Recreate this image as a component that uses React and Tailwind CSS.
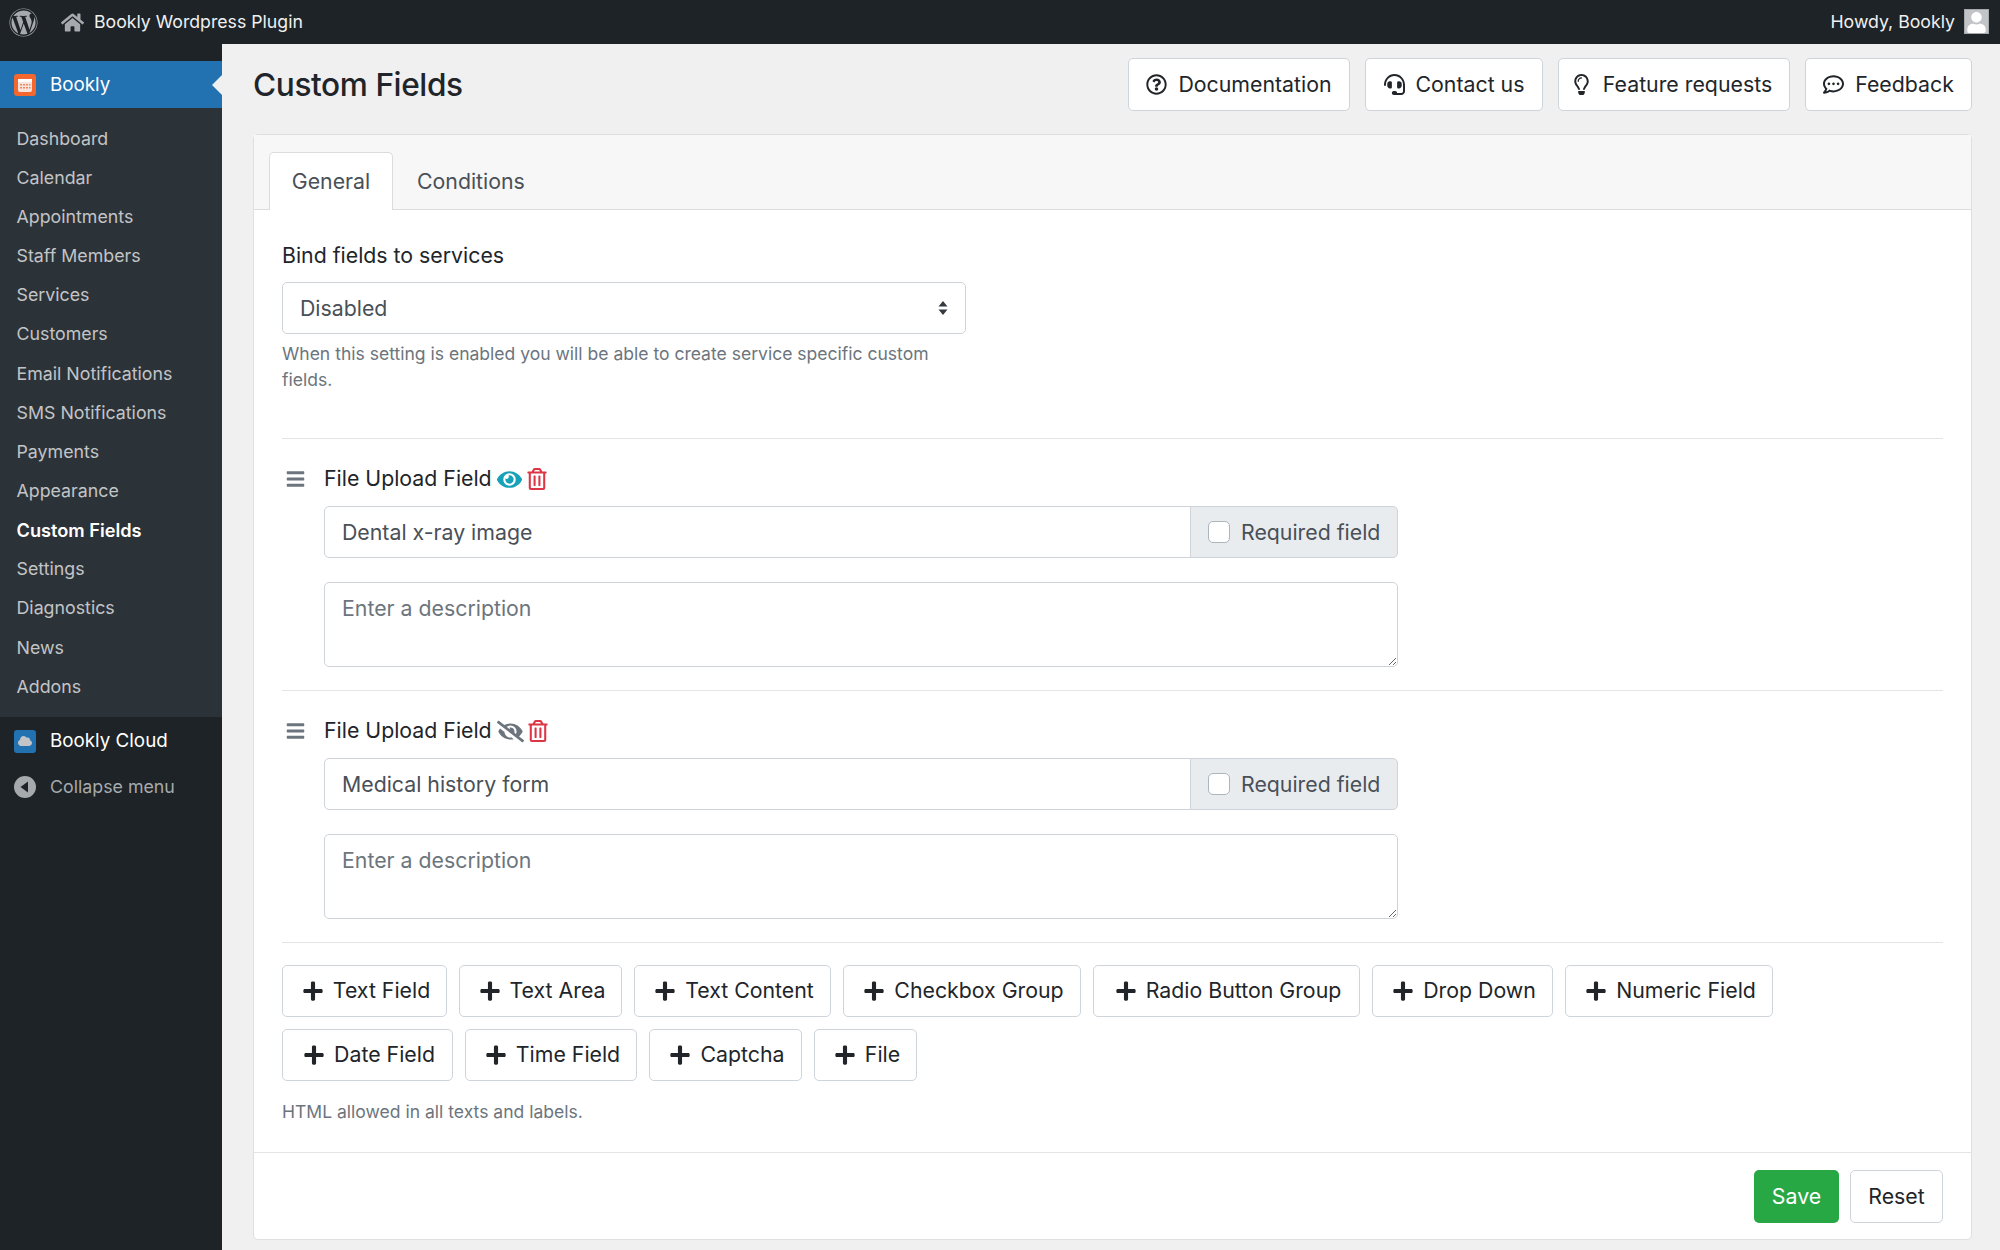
import { FaBars, FaCloud, FaEye, FaEyeSlash, FaHeadset, FaHome, FaPlus, FaRegCommentDots, FaRegLightbulb, FaRegQuestionCircle, FaRegTrashAlt, FaUser, FaWordpress } from 'react-icons/fa';

const menu = ['Dashboard', 'Calendar', 'Appointments', 'Staff Members', 'Services', 'Customers', 'Email Notifications', 'SMS Notifications', 'Payments', 'Appearance', 'Custom Fields', 'Settings', 'Diagnostics', 'News', 'Addons'];

const topButtons = [
  { label: 'Documentation', icon: FaRegQuestionCircle, width: 'w-[222px]' },
  { label: 'Contact us', icon: FaHeadset, width: 'w-[178px]' },
  { label: 'Feature requests', icon: FaRegLightbulb, width: 'w-[232px] pr-[5px]' },
  { label: 'Feedback', icon: FaRegCommentDots, width: 'w-[167px]' },
];

const addRows = [
  [['Text Field', 'w-[165px]'], ['Text Area', 'w-[163px]'], ['Text Content', 'w-[197px]'], ['Checkbox Group', 'w-[238px]'], ['Radio Button Group', 'w-[267px]'], ['Drop Down', 'w-[181px]'], ['Numeric Field', 'w-[208px]']],
  [['Date Field', 'w-[171px]'], ['Time Field', 'w-[172px]'], ['Captcha', 'w-[153px]'], ['File', 'w-[103px]']],
];

function CalendarIcon() {
  return (
    <svg width="22" height="22" viewBox="0 0 22 22" className="shrink-0">
      <rect width="22" height="22" rx="3" fill="#f4682f" />
      <rect x="4" y="5" width="14" height="13" rx="2" fill="#f6e4dc" />
      <rect x="4" y="5" width="14" height="3" fill="#ffffff" />
      <path d="M6 10h2v1.5H6zM9 10h2v1.5H9zM12 10h2v1.5h-2zM15 10h1.5v1.5H15zM6 13h2v1.5H6zM9 13h2v1.5H9zM12 13h2v1.5h-2zM15 13h1.5v1.5H15z" fill="#f08a65" />
    </svg>
  );
}

function CollapseIcon() {
  return (
    <svg width="22" height="22" viewBox="0 0 22 22" className="shrink-0">
      <circle cx="11" cy="11" r="11" fill="#a7aaad" />
      <path d="M14 5.5v11L6.5 11z" fill="#1d2327" />
    </svg>
  );
}

function Sidebar() {
  return (
    <aside className="w-[222px] shrink-0 bg-[#1d2327] pt-[17px]">
      <div className="relative flex h-[47px] items-center gap-[14px] bg-[#2271b1] pl-[14px] text-[18.8px] text-white">
        <CalendarIcon />
        <span className="pt-[2px]">Bookly</span>
        <span className="absolute right-0 top-[14px] border-y-[10px] border-r-[10px] border-y-transparent border-r-[#f0f0f1]" />
      </div>
      <ul className="h-[609px] bg-[#2c3338] pt-[11.5px]">
        {menu.map(item => (
          <li
            key={item}
            className={`flex h-[39.15px] items-center pl-[16.5px] ${item === 'Custom Fields' ? 'text-[18.2px] font-semibold text-white' : 'text-[17.8px] text-[#c3c4c7]'}`}
          >
            {item}
          </li>
        ))}
      </ul>
      <div className="pt-[1px]">
        <div className="flex h-[46px] items-center gap-[14px] pl-[14px] text-[18.8px] text-white">
          <span className="flex h-[23px] w-[22px] items-center justify-center rounded-[3px] bg-[#2271b1] text-[14px] text-[#c3c4c7]">
            <FaCloud />
          </span>
          <span>Bookly Cloud</span>
        </div>
        <div className="flex h-[46px] items-center gap-[14px] pl-[14px] text-[17.8px] text-[#a7aaad]">
          <CollapseIcon />
          <span>Collapse menu</span>
        </div>
      </div>
    </aside>
  );
}

function TopBar() {
  return (
    <header className="flex h-[44px] items-center justify-between bg-[#1d2327] pl-[9px] pr-[11px] text-[17.7px] text-[#f0f0f1]">
      <div className="flex items-center">
        <FaWordpress className="text-[29px] text-[#a7aaad]" />
        <FaHome className="ml-[23px] text-[23px] text-[#a7aaad]" />
        <span className="ml-[10px]">Bookly Wordpress Plugin</span>
      </div>
      <div className="flex items-center gap-[9px]">
        <span>Howdy, Bookly</span>
        <span className="flex h-[25px] w-[25px] items-end justify-center border border-[#a7aaad] bg-[#c3c4c7] text-[21px] text-white">
          <FaUser />
        </span>
      </div>
    </header>
  );
}

function FieldBlock({ value, hidden }) {
  return (
    <div className="border-t border-[#e4e4e4] pb-[23px] pt-[25px]">
      <div className="flex h-[30px] items-center">
        <FaBars className="ml-[4px] w-[19px] text-[20px] text-[#6c757d]" />
        <span className="ml-[19px] text-[#212529]">File Upload Field</span>
        {hidden ? <FaEyeSlash className="ml-[5px] mr-[3px] text-[27px] text-[#6c757d]" /> : <FaEye className="ml-[5px] mr-[4px] text-[25px] text-[#17a2b8]" />}
        <FaRegTrashAlt className="text-[22px] text-[#dc3545]" />
      </div>
      <div className="ml-[42px] mt-[12px] w-[1074px]">
        <div className="flex h-[52px]">
          <input readOnly value={value} className="min-w-0 flex-1 rounded-l-[5px] border border-[#ced4da] bg-white px-[17px] pt-[2px] text-[#495057] outline-none" />
          <label className="-ml-px flex w-[208px] items-center rounded-r-[5px] border border-[#ced4da] bg-[#e9ecef] pl-[17px] text-[#495057]">
            <input type="checkbox" className="h-[22px] w-[22px] appearance-none rounded-[5px] border border-[#adb5bd] bg-white" />
            <span className="ml-[11px] pt-[2px]">Required field</span>
          </label>
        </div>
        <textarea placeholder="Enter a description" className="mt-[24px] block h-[85px] w-full rounded-[5px] border border-[#ced4da] bg-white px-[17px] py-[10px] text-[#495057] outline-none placeholder:text-[#6c757d]" />
      </div>
    </div>
  );
}

export default function App() {
  return (
    <div className="h-[1250px] w-[2000px] overflow-hidden bg-[#f0f0f1] font-['Inter','Noto_Sans',sans-serif] text-[21.3px] text-[#212529]">
      <TopBar />
      <div className="flex h-[1206px]">
        <Sidebar />
        <main className="min-w-0 flex-1 pl-[31px] pr-[28px]">
          <div className="flex items-center justify-between pb-[23px] pt-[14px]">
            <h1 className="text-[31.6px] font-medium leading-[53px] tracking-[-0.4px]">Custom Fields</h1>
            <div className="flex gap-[15px]">
              {topButtons.map(({ label, icon: Icon, width }) => (
                <button key={label} className={`flex h-[53px] items-center justify-center gap-[11px] rounded-[5px] border border-[#ced4da] bg-white ${width}`}>
                  <Icon className="text-[21px]" />
                  {label}
                </button>
              ))}
            </div>
          </div>

          <section className="flex h-[1106px] flex-col rounded-[5px] border border-[#dfdfdf] bg-white">
            <div className="flex h-[75px] items-end border-b border-[#dcdcdc] bg-[#f7f7f7] pl-[15px]">
              <div className="-mb-px flex h-[58px] w-[124px] items-center justify-center rounded-t-[5px] border border-b-0 border-[#dcdcdc] bg-white text-[#495057]">General</div>
              <div className="-mb-px ml-[24px] flex h-[58px] items-center pt-[2px] text-[#495057]">Conditions</div>
            </div>

            <div className="flex-1 px-[28px] pt-[30px]">
              <label className="block leading-[30px]">Bind fields to services</label>
              <div className="relative mt-[12px] w-[684px]">
                <select className="h-[52px] w-full appearance-none rounded-[5px] border border-[#ced4da] bg-white px-[17px] pt-[2px] text-[#495057] outline-none">
                  <option>Disabled</option>
                </select>
                <svg width="12" height="16" viewBox="0 0 12 16" className="absolute right-[17px] top-[18px]">
                  <path d="M6 1l4.5 5.5h-9zM6 15l-4.5-5.5h9z" fill="#343a40" />
                </svg>
              </div>
              <p className="mb-[45px] mt-[7px] w-[684px] text-[17.55px] leading-[26px] text-[#6c757d]">
                When this setting is enabled you will be able to create service specific custom fields.
              </p>

              <FieldBlock value="Dental x-ray image" />
              <FieldBlock value="Medical history form" hidden />

              <div className="flex flex-col gap-[12px] border-t border-[#e4e4e4] pt-[22px]">
                {addRows.map((row, i) => (
                  <div key={i} className="flex gap-[12px]">
                    {row.map(([label, width]) => (
                      <button key={label} className={`flex h-[52px] items-center justify-center gap-[9px] rounded-[5px] border border-[#ced4da] bg-white pl-[3px] ${width}`}>
                        <FaPlus className="text-[22px]" />
                        {label}
                      </button>
                    ))}
                  </div>
                ))}
              </div>
              <p className="mt-[18px] text-[17.55px] leading-[26px] text-[#6c757d]">HTML allowed in all texts and labels.</p>
            </div>

            <div className="flex h-[87px] justify-end gap-[11px] border-t border-[#e4e4e4] pr-[28px] pt-[17px]">
              <button className="h-[53px] w-[85px] rounded-[5px] bg-[#28a745] text-white">Save</button>
              <button className="h-[53px] w-[93px] rounded-[5px] border border-[#ced4da] bg-white">Reset</button>
            </div>
          </section>
        </main>
      </div>
    </div>
  );
}
